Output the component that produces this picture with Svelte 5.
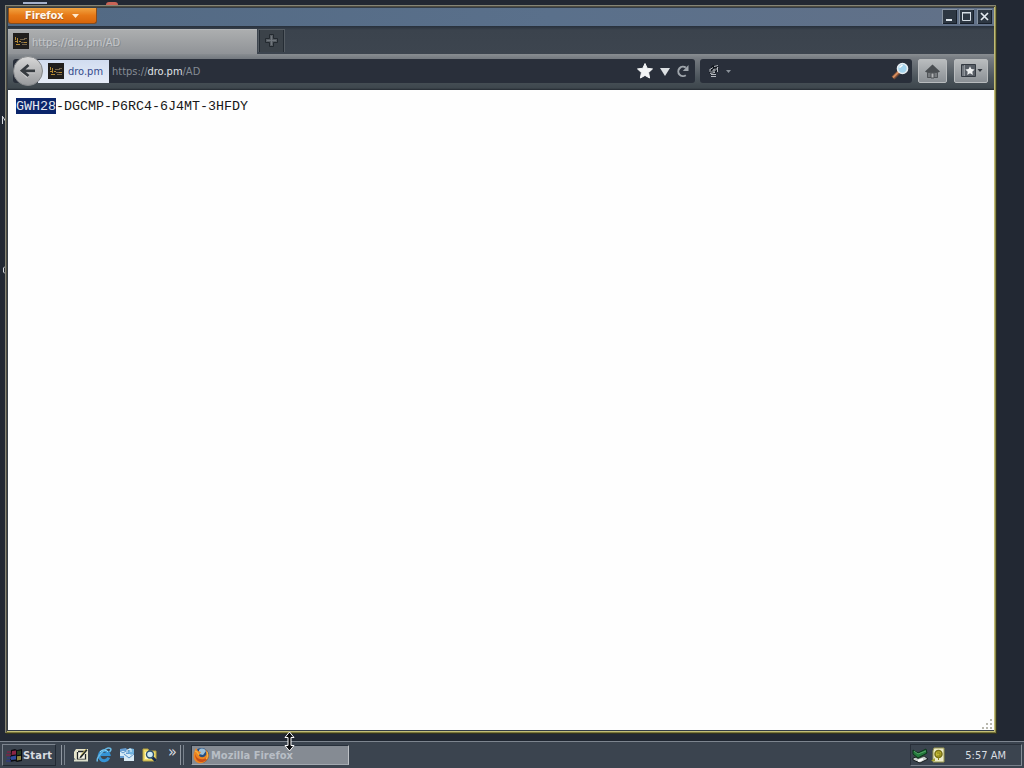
<script lang="ts">
	const host: string = 'dro.pm';
	const keyStart: string = 'GWH28';
	const keyRest: string = '-DGCMP-P6RC4-6J4MT-3HFDY';
	const clock: string = '5:57 AM';
</script>

{#snippet favicon()}
	<svg width="16" height="16" viewBox="0 0 16 16">
		<rect width="16" height="16" fill="#201e1d" />
		<path d="M2.5 4v3M4.5 5v5M2 8.5h3M3 11.5h4M6 8.5h2M11 9.5h3" stroke="#b58a35" />
		<path d="M7 6.5h5M8 9.5h3M9 11.5h5M11 5.5h3" stroke="#75654d" />
	</svg>
{/snippet}

<div class="screen">
	<div class="desktop">
		<!-- Desktop icons that stick out behind the window -->
		<div class="behind icon-a"></div>
		<div class="behind icon-b"></div>
		<svg class="behind label-a" width="4" height="8" viewBox="0 0 4 8">
			<path d="M.5 0v8M1 1l3 5" stroke="#d9dce0" />
		</svg>
		<svg class="behind label-b" width="4" height="8" viewBox="0 0 4 8">
			<path d="M4 .5H3L1.5 2v4L3 7.5h1" fill="none" stroke="#d9dce0" />
		</svg>

		<div class="window">
			<div class="titlebar">
				<div class="firefox-button">
					<span>Firefox</span>
					<svg width="7" height="4" viewBox="0 0 7 4"><path d="M0 0h7L3.5 4z" fill="#ffe9ce" /></svg>
				</div>
				<div class="controls">
					<svg width="15" height="15" viewBox="0 0 15 15">
						<rect x=".5" y=".5" width="14" height="14" fill="#2d3743" stroke="#8692a0" />
						<path d="M1 14.5h14M14.5 1v14" stroke="#171f2a" />
						<path d="M4 11h6" stroke="#e2e9f0" stroke-width="2" />
					</svg>
					<svg width="15" height="15" viewBox="0 0 15 15">
						<rect x=".5" y=".5" width="14" height="14" fill="#2d3743" stroke="#8692a0" />
						<path d="M1 14.5h14M14.5 1v14" stroke="#171f2a" />
						<path d="M3.5 4v7.5h8V4M3 4h9" fill="none" stroke="#d5dde5" />
						<path d="M3 3.5h9" stroke="#d5dde5" />
					</svg>
					<svg class="close" width="15" height="15" viewBox="0 0 15 15">
						<rect x=".5" y=".5" width="14" height="14" fill="#2d3743" stroke="#8692a0" />
						<path d="M1 14.5h14M14.5 1v14" stroke="#171f2a" />
						<path d="M4 4l7 7M11 4l-7 7" stroke="#e2e9f0" stroke-width="1.7" />
					</svg>
				</div>
			</div>

			<div class="tabs">
				<div class="tab">
					{@render favicon()}
					<span>https://dro.pm/AD</span>
				</div>
				<div class="new-tab">
					<svg width="15" height="16" viewBox="0 0 15 16">
						<path d="M5.5 1.5h4v4h4v4h-4v4h-4v-4h-4v-4h4z" fill="#555b61" stroke="#23292f" />
						<path d="M3 7.5h9M7.5 3v9" stroke="#70767c" />
					</svg>
				</div>
			</div>

			<div class="nav">
				<div class="location">
					<div class="back">
						<svg width="30" height="30" viewBox="0 0 30 30">
							<defs>
								<linearGradient id="back-fill" x1="0" y1="0" x2="0" y2="1">
									<stop offset="0" stop-color="#d8d8d8" />
									<stop offset="1" stop-color="#97999c" />
								</linearGradient>
							</defs>
							<circle cx="15" cy="15" r="14.5" fill="url(#back-fill)" stroke="#85888b" />
							<path d="M15 9.5l-6 5.8 6 5.7M10 15.8h12" fill="none" stroke="#e4e4e4" stroke-width="3" opacity=".65" />
							<path d="M15.5 9L9 14.8l6.5 5.2M10 14.8h12" fill="none" stroke="#363b40" stroke-width="2.8" />
						</svg>
					</div>
					<div class="identity">
						{@render favicon()}
						<span>{host}</span>
					</div>
					<div class="url">https://<b>{host}</b>/AD</div>
					<div class="url-actions">
						<svg width="18" height="18" viewBox="0 0 18 18">
							<path d="M9 1.5l2.2 4.8 5.3.6-3.9 3.7 1 5.4L9 13.4 4.4 16l1-5.4-3.9-3.7 5.3-.6z" fill="#f2f4f5" stroke="#f2f4f5" stroke-linejoin="round" />
						</svg>
						<svg width="10" height="9" viewBox="0 0 10 9"><path d="M0 1h10L5 9z" fill="#dce0e3" /></svg>
						<svg width="14" height="14" viewBox="0 0 14 14">
							<path d="M9.8 3.6A4.7 4.7 0 1 0 9.8 11.2" fill="none" stroke="#a0a6ac" stroke-width="2" />
							<path d="M12.5 1v6H6.8z" fill="#a0a6ac" />
						</svg>
					</div>
				</div>

				<div class="search">
					<svg width="12" height="14" viewBox="0 0 12 14">
						<path d="M3 3l2-2 2 1 2-1 2 2-1 4-2 1-2 3H3L1 8l2-2z" fill="#11161d" />
						<path d="M2 5.5l3-2M3 8.5l4-4M6 7.5l4-4M2 9.5l5-1M6 2.5l4-1M9.5 3v5M3 10.5h5M3 12.5h5M2 5v3M6 5v4" stroke="#b7bbc0" />
					</svg>
					<svg class="engine-arrow" width="5" height="3" viewBox="0 0 5 3"><path d="M0 0h5L2.5 3z" fill="#8a9199" /></svg>
					<svg class="magnifier" width="18" height="18" viewBox="0 0 18 18">
						<path d="M8 10l-6 6" stroke="#744b37" stroke-width="4" />
						<path d="M8 9.5l-6 6" stroke="#d48c5d" stroke-width="2" />
						<circle cx="11.5" cy="6.5" r="5" fill="#a4d4ed" stroke="#e6edf1" stroke-width="1.6" />
						<path d="M8.5 5.5l3-2.5" stroke="#fff" stroke-width="1.5" />
					</svg>
				</div>

				<div class="tool home">
					<svg width="17" height="16" viewBox="0 0 17 16">
						<path d="M8.5 1.5L16 8.5l-1.5 1L14 9v5.5H3V9l-.5.5-1.5-1z" fill="#4a4e52" />
						<path d="M3.5 9.5h10v5h-10z" fill="#777b7f" stroke="#505458" />
						<path d="M7 10h3v5H7z" fill="#b3b5b7" stroke="#4c5054" />
					</svg>
				</div>
				<div class="tool bookmarks">
					<svg width="23" height="16" viewBox="0 0 23 16">
						<path d="M1.5 1.5h14v12h-14z" fill="#575d65" stroke="#343a42" />
						<path d="M4.5 2v11M2 4h2M2 6h2M2 8h2M2 10h2M2 12h2" stroke="#92979d" />
						<path d="M10 3.2l1.4 2.9 3.2.4-2.3 2.2.6 3.2-2.9-1.6-2.8 1.6.5-3.2L5.4 6.5l3.2-.4z" fill="#eceeef" />
						<path d="M17.5 6h5L20 9z" fill="#32383f" />
					</svg>
				</div>
			</div>

			<div class="page">
				<pre><span class="selected">{keyStart}</span>{keyRest}</pre>
				<svg class="grip" width="12" height="12" viewBox="0 0 12 12">
					<path d="M9 1h2v2H9zM5 5h2v2H5zM9 5h2v2H9zM1 9h2v2H1zM5 9h2v2H5zM9 9h2v2H9z" fill="#b9b8ae" />
				</svg>
			</div>
		</div>
	</div>

	<div class="taskbar">
		<div class="start">
			<svg width="17" height="15" viewBox="0 0 17 15">
				<path d="M5 2l4-1 2 1 5-1v12l-5 1-2-1-5 1z" fill="#090b10" />
				<path d="M6 3l4-.6v4L5.5 7z" fill="#8c2545" />
				<path d="M11 3.1l4-.6v4l-4 .7z" fill="#263d21" />
				<path d="M5 8.4l5-.8v4L5 12z" fill="#304c9e" />
				<path d="M11 8.3l4-.6v4l-4 .7z" fill="#8d823e" />
				<path d="M1 4h4M0 7h5" stroke="#7c2546" stroke-width="1.7" />
				<path d="M1 10h4M0 13h5" stroke="#303a80" stroke-width="1.7" />
			</svg>
			<span>Start</span>
		</div>
		<div class="divider first"></div>
		<div class="quick-launch">
			<svg width="16" height="16" viewBox="0 0 16 16">
				<path d="M3 2h12v12H4l-3-3V5z" fill="#e7e5cb" />
				<path d="M4 4h8v9H4z" fill="#f8f7e9" />
				<path d="M5 4.5h6M4.5 5v7.5h8V7" fill="none" stroke="#23282b" stroke-width="1.3" />
				<path d="M7 9.5L13 2l1.5 1.2-6 7.2-2 .8z" fill="#252b29" />
				<path d="M1 13.5h14" stroke="#dcdecb" stroke-width="2" />
				<path d="M8 8l5-6" stroke="#c5b65c" />
			</svg>
			<svg width="16" height="16" viewBox="0 0 16 16">
				<path d="M12.8 10.5A5 5 0 1 1 13 7.5H4" fill="none" stroke="#3593d5" stroke-width="3" />
				<path d="M12 5A5 5 0 0 0 4 5" fill="none" stroke="#9cdbf6" />
				<path d="M1.5 14.5C-.5 11 10-1 14.5 1.5c1 .7 0 2.5-1 3.5" fill="none" stroke="#69b9e5" stroke-width="1.5" />
			</svg>
			<svg width="16" height="16" viewBox="0 0 16 16">
				<path d="M1 2l6-1 2 3v7H1zM6 5h9v9H5z" fill="#659cd1" />
				<path d="M5 7h10v7H5z" fill="#d9eaf4" />
				<path d="M1 4h6v5H1z" fill="#d4e8f4" />
				<path d="M5 7l5 4 5-4M1 4l3 2 3-2" fill="none" stroke="#5b94c8" />
				<path d="M10 1l5 1v4l-3 2-3-3z" fill="#71b3df" />
				<path d="M8 3l4-1v3M8 3v3" fill="none" stroke="#e1f1f8" />
			</svg>
			<svg width="16" height="16" viewBox="0 0 16 16">
				<path d="M1 2h5l1 2h7v10H1z" fill="#f0dc68" stroke="#b3a145" />
				<path d="M3 5h7v7H3z" fill="#fff8bb" />
				<path d="M10 10l4 4" stroke="#182c4d" stroke-width="3" />
				<circle cx="8" cy="7.5" r="3.5" fill="#d1ebf3" stroke="#2b506f" stroke-width="1.4" />
			</svg>
			<span class="more">»</span>
		</div>
		<div class="divider"></div>
		<div class="task">
			<svg width="17" height="17" viewBox="0 0 17 17">
				<circle cx="8.5" cy="8.5" r="7.5" fill="#264f81" />
				<path d="M6 3c2-2 5-2 7 1l-3 4-4-1z" fill="#9cc0da" />
				<path d="M2 3l1-2 2 3 3 1-2 3c1 3 5 3 7 0 1-2 0-4-1-6 4 3 5 8 2 11-4 5-11 4-13-1-1-4 0-6 1-9z" fill="#ed8522" />
				<path d="M2 7c1 3 3 5 6 5 3 1 5-1 7-4 0 5-3 7-7 7s-6-4-6-8z" fill="#cb5017" />
				<path d="M2 4l2 1 2 3M14 5c1 3 1 5-1 7" fill="none" stroke="#f3b140" stroke-width="1.3" />
			</svg>
			<span>Mozilla Firefox</span>
		</div>
		<div class="tray">
			<svg width="17" height="17" viewBox="0 0 17 17">
				<path d="M1 11l10-3 5 4-8 4-7-3z" fill="#c7cdca" stroke="#161c1e" />
				<path d="M1 9l8-2 5 2-8 3z" fill="#39483f" />
				<path d="M1 3l5 3 8-4 1 4-9 5-5-4z" fill="#247a3c" stroke="#0b341a" />
				<path d="M2 4l4 3 8-3" fill="none" stroke="#55a265" />
				<path d="M6 14l5-2" stroke="#fff" stroke-width="2" />
			</svg>
			<svg width="14" height="16" viewBox="0 0 14 16">
				<path d="M3 1h10v14H2V4z" fill="#ecebc8" stroke="#99964e" />
				<circle cx="7.5" cy="7" r="3.5" fill="#c2b735" stroke="#777016" stroke-width="1.5" />
				<path d="M6 6h3v3H6M7.5 10v3" fill="none" stroke="#888019" />
				<path d="M0 14l4-3v3z" fill="#a7a12c" />
			</svg>
			<time>{clock}</time>
		</div>
	</div>

	<svg class="cursor" width="11" height="21" viewBox="0 0 11 21">
		<path d="M5.5 1L10 6.5H7v8h3L5.5 20 1 14.5h3v-8H1z" fill="#080a0d" stroke="#fff" />
	</svg>
</div>

<style>
	:global(body) {
		margin: 0;
		overflow: hidden;
	}

	.screen {
		position: relative;
		display: flex;
		flex-direction: column;
		width: 1024px;
		height: 768px;
		overflow: hidden;
		background: #222833;
		color: #d9dde1;
		font-family: 'DejaVu Sans Condensed', 'DejaVu Sans', sans-serif;
		font-size: 11px;
	}

	svg {
		display: block;
		flex: none;
	}

	.desktop {
		position: relative;
		box-sizing: border-box;
		height: 740px;
		padding: 5px 0 0 5px;
	}

	.behind {
		position: absolute;
	}

	.icon-a {
		left: 23px;
		top: 2px;
		width: 24px;
		height: 2px;
		background: #a6b1ca;
	}

	.icon-b {
		left: 106px;
		top: 2px;
		width: 12px;
		height: 3px;
		border-radius: 5px 5px 0 0;
		background: #c96456;
	}

	.label-a {
		left: 2px;
		top: 116px;
	}

	.label-b {
		left: 2px;
		top: 266px;
	}

	.window {
		position: relative;
		display: flex;
		flex-direction: column;
		box-sizing: border-box;
		width: 991px;
		height: 728px;
		border: 1px solid #858577;
		border-right-color: #89854a;
		border-bottom-color: #77743a;
		box-shadow: inset 1px 1px #4f4c40, inset -1px -1px #c1bc76, 1px 1px #343520;
		padding: 2px 1px 2px 2px;
		background: #343d47;
	}

	.titlebar {
		display: flex;
		align-items: flex-start;
		justify-content: space-between;
		height: 18px;
		background: linear-gradient(90deg, #526983, #5a708b 55%, #627188);
	}

	.firefox-button {
		display: flex;
		align-items: center;
		box-sizing: border-box;
		width: 89px;
		height: 16px;
		padding-left: 16px;
		gap: 8px;
		border: 1px solid #864c1d;
		border-top: 0;
		border-radius: 0 0 3px 3px;
		background: linear-gradient(#f1a441, #e67816 50%, #d7650b);
		color: #fff8ed;
		font-weight: bold;
		letter-spacing: -0.1px;
		text-shadow: 0 1px #a25820;
	}

	.controls {
		display: flex;
		gap: 2px;
		padding: 1px 2px 0 0;
	}

	.close {
		margin-left: 1px;
	}

	.tabs {
		display: flex;
		box-sizing: border-box;
		height: 28px;
		padding-top: 3px;
		background: linear-gradient(#27303c, #3b434d 4px, #3d454f);
	}

	.tab {
		display: flex;
		align-items: center;
		box-sizing: border-box;
		width: 249px;
		height: 25px;
		padding-left: 5px;
		gap: 3px;
		border-top: 1px solid #b6b8ba;
		background: linear-gradient(#acaeaf, #909397);
		color: #c4c7ca;
	}

	.tab span {
		text-shadow: 1px 1px #85898d;
	}

	.tab svg {
		margin-top: -2px;
	}

	.new-tab {
		display: flex;
		justify-content: center;
		align-items: center;
		box-sizing: border-box;
		width: 27px;
		height: 23px;
		margin-left: 1px;
		border: 1px solid #555c63;
		border-bottom: 0;
		background: #3b4249;
		box-shadow: inset 1px 0 #252c34, inset -1px 0 #252c34;
	}

	.nav {
		display: flex;
		align-items: center;
		box-sizing: border-box;
		height: 36px;
		padding: 0 6px 2px 5px;
		background: linear-gradient(#898d91, #777c82 4px, #4b545b 24px, #3e474d 34px, #232a31);
	}

	.location {
		display: flex;
		align-items: center;
		width: 682px;
		height: 24px;
		border-radius: 3px;
		background: #292f3a;
	}

	.back {
		position: relative;
		z-index: 1;
		width: 30px;
	}

	.identity {
		display: flex;
		align-items: center;
		box-sizing: border-box;
		width: 71px;
		height: 23px;
		margin-left: -5px;
		padding-left: 10px;
		gap: 4px;
		background: linear-gradient(#d1dcf0, #e6ecf7);
		color: #354b8d;
	}

	.url {
		margin-left: 3px;
		color: #858c95;
	}

	.url b {
		color: #e0e4e8;
		font-weight: normal;
	}

	.url-actions {
		display: flex;
		align-items: center;
		margin-left: auto;
		padding-right: 5px;
		gap: 6px;
	}

	.search {
		display: flex;
		align-items: center;
		box-sizing: border-box;
		width: 212px;
		height: 24px;
		margin-left: 5px;
		padding: 0 3px 0 8px;
		border-radius: 3px;
		background: #292f3a;
	}

	.engine-arrow {
		margin-left: 6px;
	}

	.magnifier {
		margin-left: auto;
	}

	.tool {
		display: flex;
		align-items: center;
		justify-content: center;
		box-sizing: border-box;
		height: 24px;
		border: 1px solid #b9bcbe;
		border-radius: 2px;
		background: linear-gradient(#b9bcbe, #8b9095);
	}

	.home {
		width: 29px;
		margin-left: 6px;
	}

	.bookmarks {
		width: 34px;
		margin-left: 7px;
	}

	.page {
		position: relative;
		flex: 1;
		padding: 8px;
		box-sizing: border-box;
		background: #fefefe;
	}

	pre {
		margin: 0;
		color: #171717;
		font-family: 'Liberation Mono', monospace;
		font-size: 13.333px;
		line-height: 17px;
	}

	.selected {
		display: inline-block;
		height: 16px;
		background: #0a246a;
		color: #e5e8f0;
	}

	.grip {
		position: absolute;
		right: 1px;
		bottom: 0;
	}

	.taskbar {
		display: flex;
		align-items: center;
		box-sizing: border-box;
		height: 28px;
		padding: 1px 2px 0;
		border-top: 1px solid #202731;
		box-shadow: inset 0 1px #7d858f;
		background: #3b444f;
	}

	.start {
		display: flex;
		align-items: center;
		box-sizing: border-box;
		width: 54px;
		height: 22px;
		padding-left: 3px;
		border: 1px solid #7c848e;
		border-right-color: #222a34;
		border-bottom-color: #222a34;
		font-weight: bold;
		letter-spacing: 0.2px;
	}

	.divider {
		box-sizing: border-box;
		width: 4px;
		height: 20px;
		border-left: 1px solid #9097a0;
		border-right: 1px solid #7a838d;
	}

	.first {
		margin-left: 5px;
	}

	.quick-launch {
		display: flex;
		align-items: center;
		width: 115px;
		padding-left: 8px;
		gap: 7px;
		box-sizing: border-box;
	}

	.more {
		margin: -7px 0 0 3px;
		font-size: 16px;
		line-height: 16px;
	}

	.task {
		display: flex;
		align-items: center;
		box-sizing: border-box;
		width: 158px;
		height: 20px;
		margin-left: 7px;
		padding-left: 1px;
		gap: 1px;
		border: 1px solid #27303b;
		border-right-color: #bdc1c6;
		border-bottom-color: #a2a8af;
		background: #858b93;
		color: #b8bec5;
		font-weight: bold;
	}

	.tray {
		display: flex;
		align-items: center;
		box-sizing: border-box;
		width: 112px;
		height: 22px;
		margin-left: auto;
		padding: 0 15px 0 1px;
		gap: 2px;
		border: 1px solid #282f39;
		border-right-color: #858d96;
		border-bottom-color: #777f89;
	}

	time {
		margin-left: auto;
		white-space: nowrap;
	}

	.cursor {
		position: absolute;
		left: 284px;
		top: 731px;
	}
</style>
